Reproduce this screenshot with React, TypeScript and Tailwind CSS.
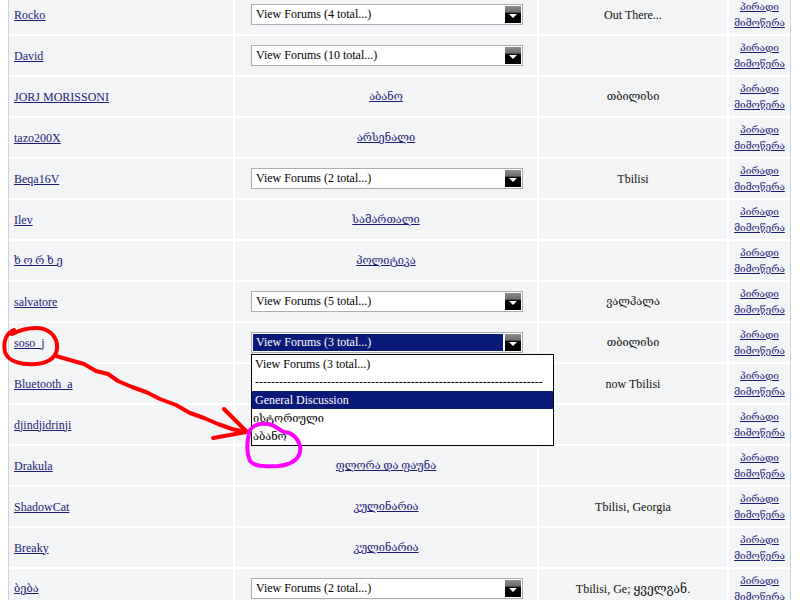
type Row = {
  name: string
  forum?: string
  count?: number
  from?: string
  open?: boolean
}

const ROWS: Row[] = [
  { name: 'Rocko', count: 4, from: 'Out There...' },
  { name: 'David', count: 10 },
  { name: 'JORJ MORISSONI', forum: 'აბანო', from: 'თბილისი' },
  { name: 'tazo200X', forum: 'არსენალი' },
  { name: 'Beqa16V', count: 2, from: 'Tbilisi' },
  { name: 'Ilev', forum: 'სამართალი' },
  { name: 'ხ ო რ ხ ე', forum: 'პოლიტიკა' },
  { name: 'salvatore', count: 5, from: 'ვალჰალა' },
  { name: 'soso_j', count: 3, from: 'თბილისი', open: true },
  { name: 'Bluetooth_a', from: 'now Tbilisi' },
  { name: 'djindjidrinji' },
  { name: 'Drakula', forum: 'ფლორა და ფაუნა' },
  { name: 'ShadowCat', forum: 'კულინარია', from: 'Tbilisi, Georgia' },
  { name: 'Breaky', forum: 'კულინარია' },
  { name: 'ბება', count: 2, from: 'Tbilisi, Ge; ყველგან.' },
]

const OPTIONS = [
  'View Forums (3 total...)',
  '------------------------------------------------------------------------',
  'General Discussion',
  'ისტორიული',
  'აბანო',
]

// georgian glyphs come from a wider fallback font, so set them a bit smaller
const geo = (s: string) => /^[\u10A0-\u10FF\s]+$/.test(s)

function Arrow() {
  return (
    <div className="w-[16px] h-[17px] mr-[1px] flex items-center justify-center bg-[linear-gradient(#8c8c8c_0%,#6e6e6e_35%,#000_45%,#000_100%)]">
      <div className="w-0 h-0 border-l-[4px] border-r-[4px] border-t-[4px] border-l-transparent border-r-transparent border-t-white mt-[3px]" />
    </div>
  )
}

function ForumSelect({ count, open }: { count: number; open?: boolean }) {
  return (
    <div className="relative ml-[16px]">
      <div className="w-[272px] h-[21px] border border-[#a8adb3] bg-white flex items-center justify-between">
        <span className={`ml-[1px] pl-[3px] pr-[3px] leading-[17px] ${open ? 'bg-[#0a1a78] text-white flex-1 mr-[2px]' : 'text-black'}`}>
          View Forums ({count} total...)
        </span>
        <Arrow />
      </div>
      {open && (
        <div className="absolute left-0 top-[22px] w-[303px] border border-black bg-white z-10">
          {OPTIONS.map((o, i) => (
            <div
              key={i}
              className={`h-[18px] leading-[18px] whitespace-nowrap overflow-hidden ${i === 1 ? 'pr-[19px] mr-[10px]' : ''} ${i === 2 ? 'bg-[#0a1a78] text-white pl-[3px]' : i > 2 ? 'pl-[1px] text-black text-[11px]' : 'pl-[3px] text-black'}`}
            >
              {o}
            </div>
          ))}
        </div>
      )}
    </div>
  )
}

function Marks() {
  return (
    <svg className="absolute left-0 top-0 z-20 pointer-events-none" width="800" height="600" viewBox="0 0 800 600">
      <path
        d="M14 330 C6 333 3 342 5 352 C8 362 22 365 36 364 C50 363 58 356 57 345 C56 335 48 328 36 328 C28 328 20 330 12 334"
        fill="none" stroke="#f00" strokeWidth="4" strokeLinecap="round"
      />
      <path
        d="M56 356 L70 360 L84 364 L96 371 L108 374 L118 381 L132 387 L146 392 L160 399 L176 405 L190 413 L204 418 L218 424 L232 429 L245 432"
        fill="none" stroke="#f00" strokeWidth="4" strokeLinecap="round" strokeLinejoin="round"
      />
      <path d="M224 409 L236 421 L246 431" fill="none" stroke="#f00" strokeWidth="4" strokeLinecap="round" />
      <path d="M213 438 L230 435 L246 432" fill="none" stroke="#f00" strokeWidth="4" strokeLinecap="round" />
      <path
        d="M250 430 C247 440 246 452 250 461 C256 468 268 466 278 466 C292 465 302 458 300 446 C298 437 290 432 284 432 C278 430 276 425 268 424 C260 423 254 424 250 430"
        fill="none" stroke="#f0f" strokeWidth="4" strokeLinecap="round"
      />
    </svg>
  )
}

export default function App() {
  return (
    <div className="relative w-[800px] h-[600px] overflow-hidden bg-white font-['Liberation_Serif','DejaVu_Serif','DejaVu_Sans',serif] text-[12px]">
      <div className="ml-[8px] -mt-[5px] w-[783px] border-l border-r border-[#cfd3d6] bg-white grid grid-cols-[224px_302px_188px_61px] gap-[2px] auto-rows-[39px]">
        {ROWS.map((r, i) => (
          <div key={i} className="contents">
            <div className="bg-[#f3f4f5] flex items-center pl-[5px]">
              <a className={`text-[#1b1b78] underline ${geo(r.name) ? 'text-[11px]' : ''}`}>{r.name}</a>
            </div>
            <div className="bg-[#f3f4f5] flex items-center justify-center">
              {r.count ? (
                <div className="w-full flex">
                  <ForumSelect count={r.count} open={r.open} />
                </div>
              ) : r.forum ? (
                <a className="text-[#1b1b78] underline text-[11px]">{r.forum}</a>
              ) : null}
            </div>
            <div className={`bg-[#f3f4f5] flex items-center justify-center text-[#111] ${r.from && geo(r.from) ? 'text-[11px]' : ''}`}>
              {r.from}
            </div>
            <div className="bg-[#f3f4f5] flex flex-col items-center justify-center leading-[16px] text-[10px]">
              <a className="text-[#1b1b78] underline">პირადი</a>
              <a className="text-[#1b1b78] underline">მიმოწერა</a>
            </div>
          </div>
        ))}
      </div>
      <Marks />
    </div>
  )
}
